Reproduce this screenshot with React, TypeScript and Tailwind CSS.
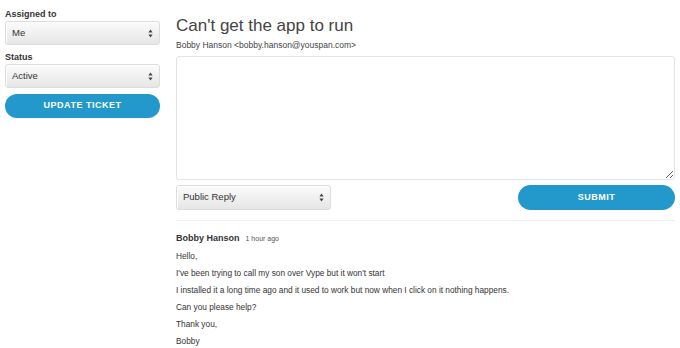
import React from 'react';

const Arrows: React.FC = () => (
  <svg width="5" height="9" viewBox="0 0 5 9" className="shrink-0">
    <path d="M2.5 0.5 L4.6 3.6 H0.4 Z" fill="#444" />
    <path d="M2.5 8.5 L4.6 5.4 H0.4 Z" fill="#444" />
  </svg>
);

const FakeSelect: React.FC<{ value: string; className?: string }> = ({
  value,
  className = ''
}) => (
  <div
    className={`flex items-center justify-between pl-[6px] pr-[6px] border border-[#dcdcdc] rounded-[3px] bg-gradient-to-b from-[#fbfbfb] to-[#e6e6e6] shadow-[inset_1px_1px_0_#fff] text-[9.5px] text-[#333] ${className}`}
  >
    <span>{value}</span>
    <Arrows />
  </div>
);

const lines = [
  'Hello,',
  "I've been trying to call my son over Vype but it won't start",
  'I installed it a long time ago and it used to work but now when I click on it nothing happens.',
  'Can you please help?',
  'Thank you,',
  'Bobby'
];

export default function App() {
  return (
    <div className="w-[680px] h-[348px] bg-white overflow-hidden flex font-['Liberation_Sans',Arial,sans-serif] text-[#333]">
      {/* sidebar */}
      <div className="w-[155px] ml-[5px] pt-[7px] flex flex-col">
        <label className="text-[9px] font-bold h-[14px] leading-[14px]">Assigned to</label>
        <FakeSelect value="Me" className="h-[24px]" />
        <label className="text-[9px] font-bold h-[14px] leading-[14px] mt-[5px]">Status</label>
        <FakeSelect value="Active" className="h-[24px]" />
        <button className="mt-[6px] h-[24px] rounded-full bg-[#2299ca] text-white text-[9px] font-bold tracking-[0.5px]">
          UPDATE TICKET
        </button>
      </div>

      {/* main */}
      <div className="ml-[16px] w-[499px] flex flex-col">
        <h1 className="mt-[15px] text-[17px] leading-[22px] text-[#444]">Can't get the app to run</h1>
        <p className="text-[8.5px] leading-[12px] mt-[2px] text-[#444]">
          Bobby Hanson &lt;bobby.hanson@youspan.com&gt;
        </p>
        <textarea className="block mt-[5px] h-[124px] min-h-[124px] w-full border border-[#dfe3ea] rounded-[3px] resize-y outline-none" />
        <div className="mt-[5px] flex items-center justify-between">
          <FakeSelect value="Public Reply" className="w-[155px] h-[25px]" />
          <button className="w-[157px] h-[25px] rounded-full bg-[#2299ca] text-white text-[9px] font-bold tracking-[0.5px]">
            SUBMIT
          </button>
        </div>
        <div className="mt-[10px] border-t border-[#eef0f3]" />
        <div className="mt-[11px] flex items-baseline gap-[6px]">
          <span className="text-[9px] font-bold">Bobby Hanson</span>
          <span className="text-[7px] text-[#555]">1 hour ago</span>
        </div>
        <div className="mt-[2px] flex flex-col">
          {lines.map(line => (
            <p key={line} className="text-[8.3px] leading-[17px] text-[#333]">
              {line}
            </p>
          ))}
        </div>
      </div>
    </div>
  );
}
